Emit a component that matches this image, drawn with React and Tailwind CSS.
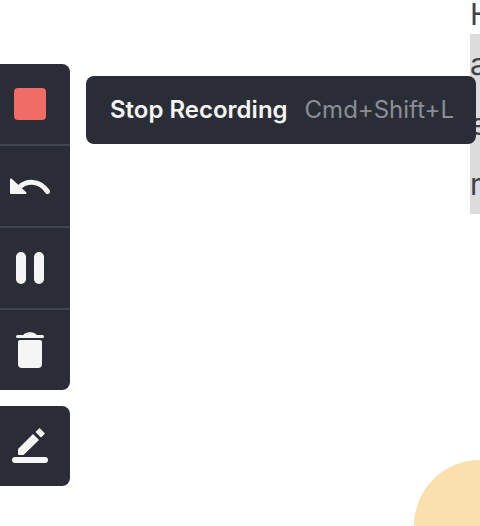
const font = { fontFamily: 'Inter, sans-serif' };

function Section({ children, first }) {
  return (
    <div className={first ? 'flex h-[80px] items-center justify-center pr-[10px]' : 'flex h-[82px] items-center justify-center border-t-2 border-[#41454e] pr-[10px]'}>
      {children}
    </div>
  );
}

function UndoIcon() {
  return (
    <svg width="40" height="16" viewBox="0 0 40 16" fill="none">
      <path d="M9 9.500C16 3 29 1 37.500 13.500" stroke="#f5f5f5" strokeWidth="5" strokeLinecap="round" />
      <path d="M0 1.500V15a1 1 0 0 0 1 1h14.500a1 1 0 0 0 .7-1.700L1.700.8a1 1 0 0 0-1.700.7z" fill="#f5f5f5" />
    </svg>
  );
}

function TrashIcon() {
  return (
    <svg width="28" height="36" viewBox="0 0 28 36" fill="none">
      <path d="M1.500 4.500h25" stroke="#f5f5f5" strokeWidth="3" strokeLinecap="round" />
      <path d="M7 4c1-5 13-5 14 0z" fill="#f5f5f5" />
      <path d="M2 10a2 2 0 0 1 2-2h20a2 2 0 0 1 2 2v22a4 4 0 0 1-4 4h-16a4 4 0 0 1-4-4z" fill="#f5f5f5" />
    </svg>
  );
}

function PenIcon() {
  return (
    <svg width="36" height="36" viewBox="0 0 36 36" fill="none">
      <path d="M6 21 21 6l6 6-15.500 15H7a1 1 0 0 1-1-1z" fill="#f5f5f5" />
      <path d="M27.500 1 32 5.500 29 8.500 24.500 4z" fill="#f5f5f5" stroke="#f5f5f5" strokeWidth="1.500" strokeLinejoin="round" />
      <rect x="0" y="29" width="36" height="6" rx="3" fill="#f5f5f5" />
    </svg>
  );
}

export default function App() {
  return (
    <div className="relative h-[526px] w-[480px] overflow-hidden bg-white" style={font}>
      {/* page behind the toolbar */}
      <div className="pl-[470px] text-[30px] leading-[60px] text-[#3f4248]">
        <div className="-mt-[16px] h-[50px]">How</div>
        <div className="w-[10px] whitespace-nowrap bg-[#dcdcdc]">
          <div>all</div>
          <div>end</div>
          <div>more</div>
        </div>
      </div>
      <div className="absolute -bottom-[66px] -right-[66px] h-[132px] w-[132px] rounded-full bg-[#f9e0ae]" />

      {/* toolbar */}
      <div className="absolute left-0 top-[64px] w-[70px] rounded-r-lg bg-[#2a2d35]">
        <Section first>
          <div className="h-8 w-8 rounded bg-[#f06c67]" />
        </Section>
        <Section>
          <UndoIcon />
        </Section>
        <Section>
          <div className="flex gap-2">
            <div className="h-8 w-[10px] rounded-full bg-[#f5f5f5]" />
            <div className="h-8 w-[10px] rounded-full bg-[#f5f5f5]" />
          </div>
        </Section>
        <Section>
          <TrashIcon />
        </Section>
      </div>

      <div className="absolute left-0 top-[406px] flex h-[80px] w-[70px] items-center justify-center rounded-r-lg bg-[#2a2d35] pr-[10px]">
        <PenIcon />
      </div>

      {/* tooltip */}
      <div className="absolute left-[86px] top-[76px] flex h-[68px] w-[390px] items-center gap-[17px] whitespace-nowrap rounded-lg bg-[#2a2d35] pl-6 text-2xl leading-none">
        <span className="font-semibold text-[#f5f5f5]">Stop Recording</span>
        <span className="text-[#8a8d98]">Cmd+Shift+L</span>
      </div>
    </div>
  );
}
